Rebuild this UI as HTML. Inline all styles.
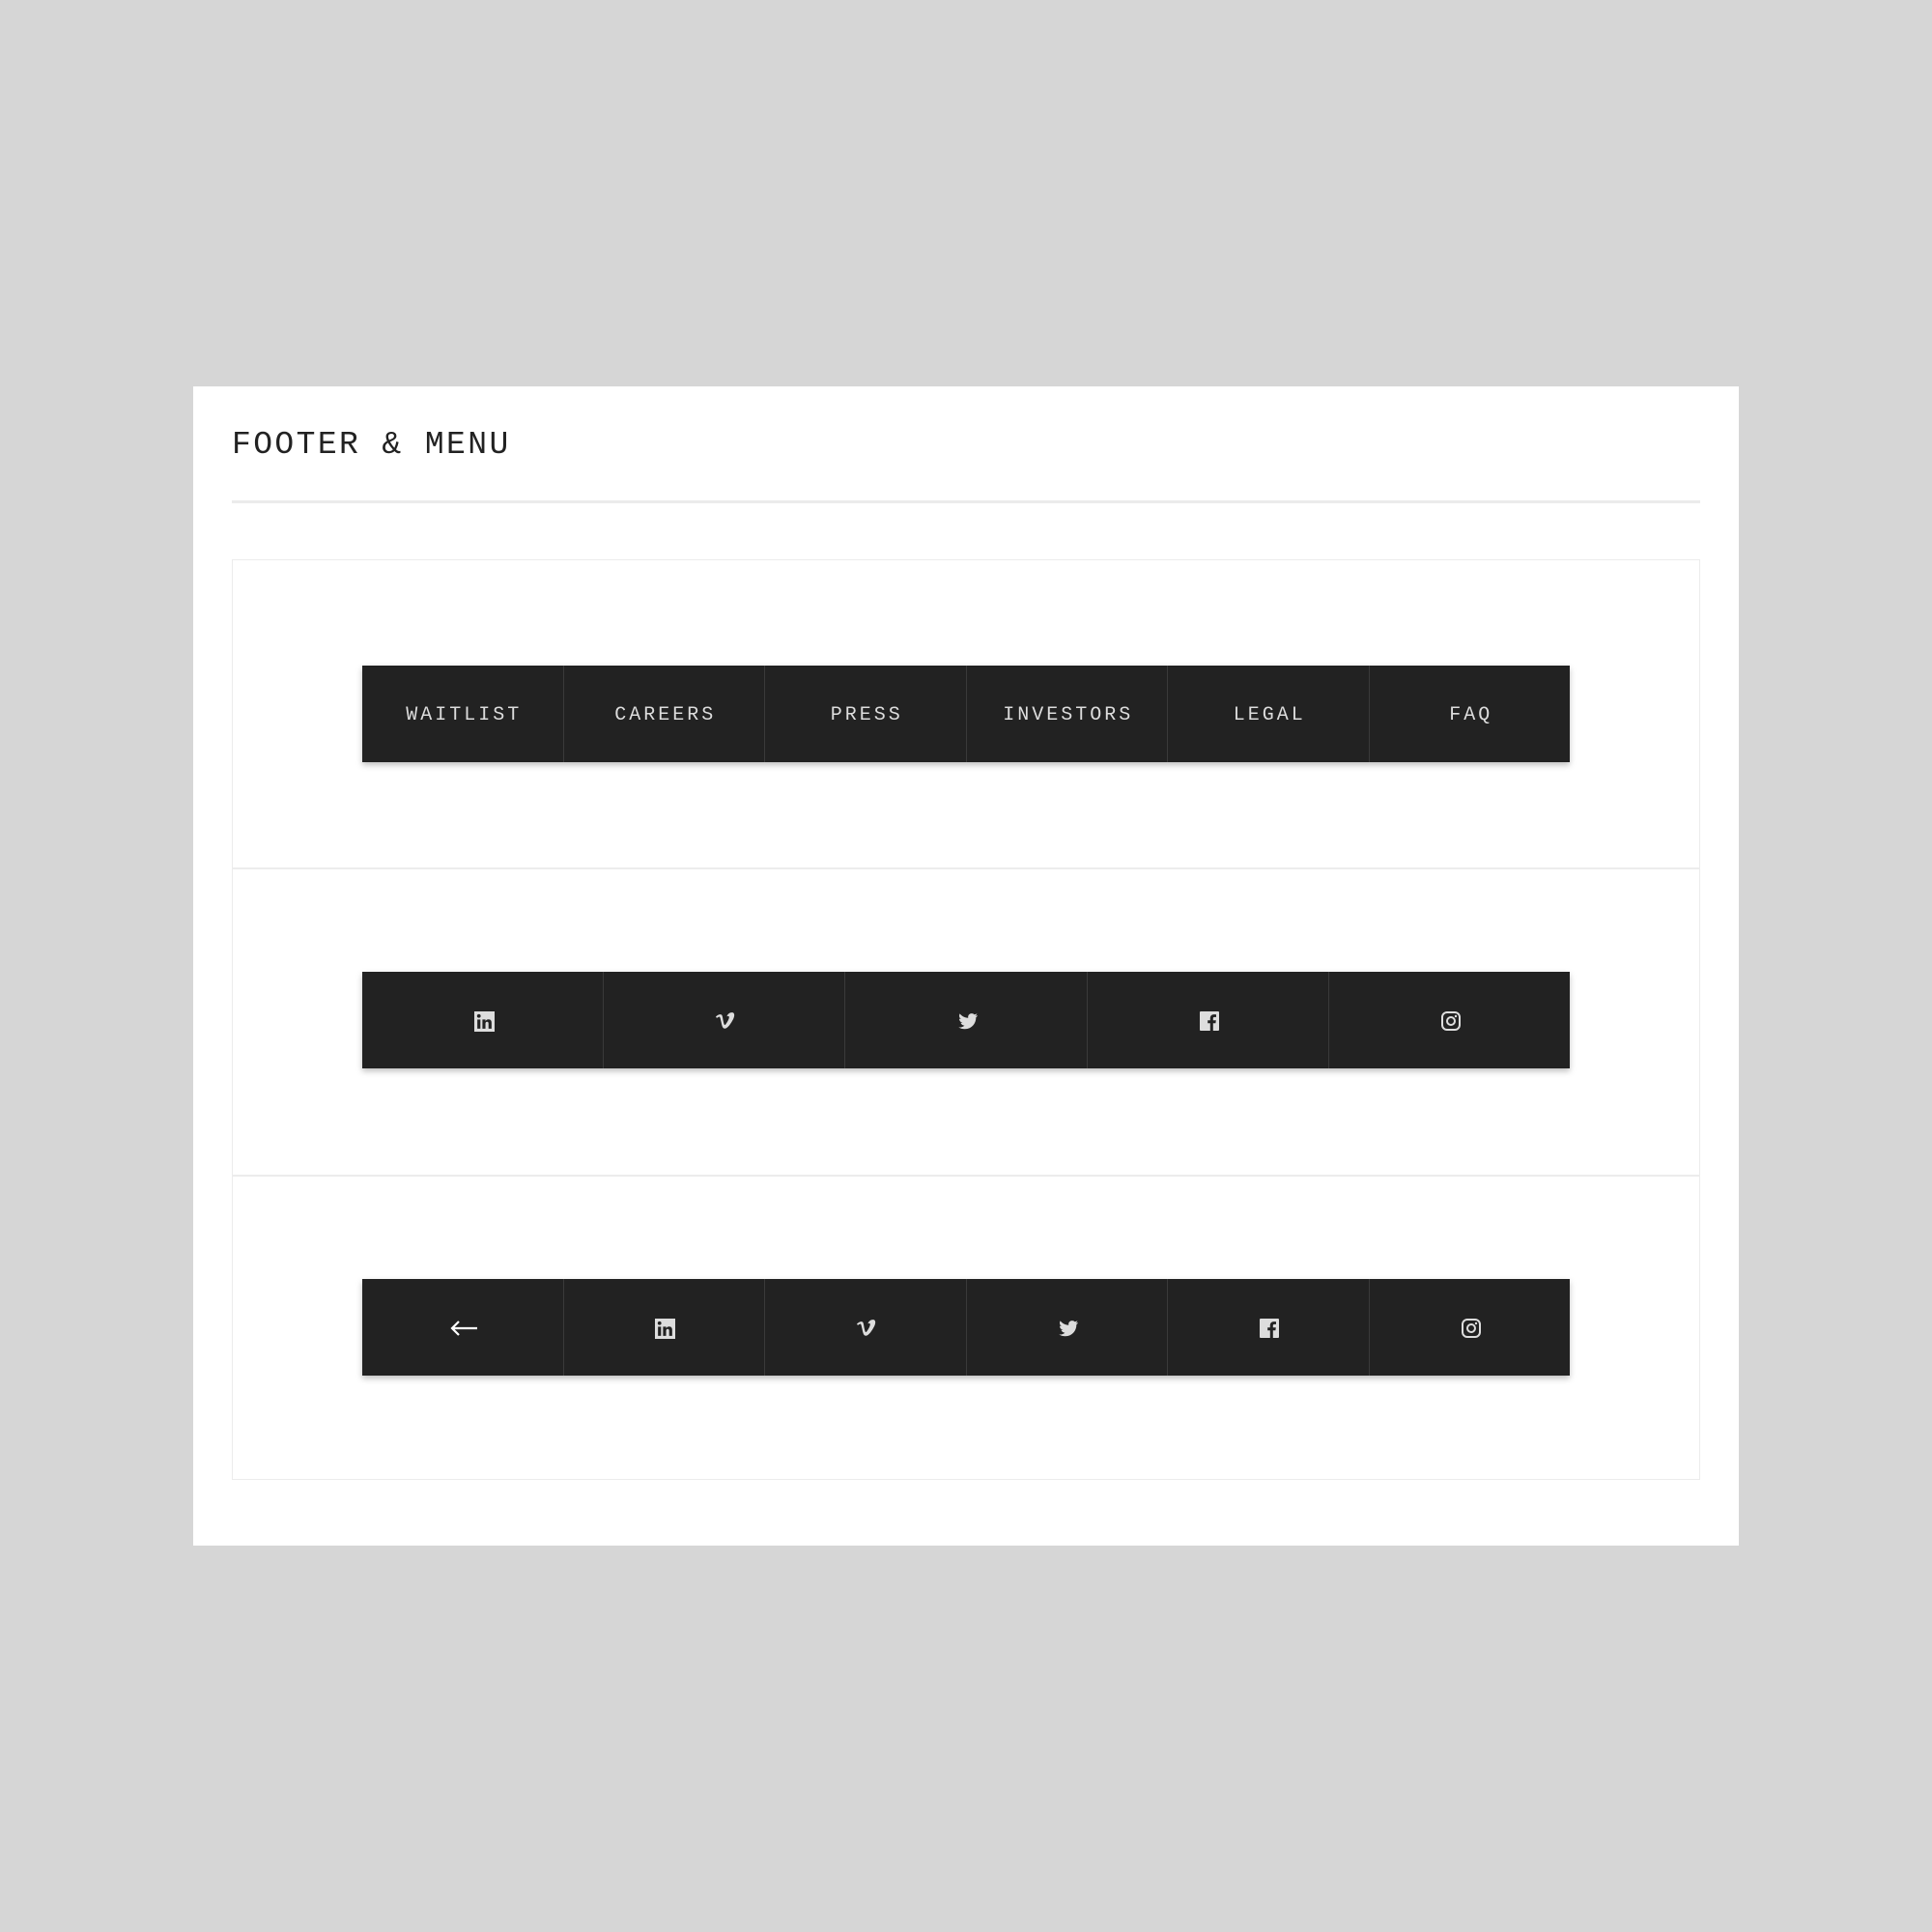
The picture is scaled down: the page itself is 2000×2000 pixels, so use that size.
<!DOCTYPE html>
<html><head><meta charset="utf-8"><style>
*{margin:0;padding:0;box-sizing:border-box}
body{width:2000px;height:2000px;background:#d6d6d6;position:relative;font-family:"Liberation Mono",monospace}
.card{position:absolute;left:200px;top:400px;width:1600px;height:1200px;background:#fff}
.title{position:absolute;left:240px;top:441px;font-size:33px;letter-spacing:2.4px;color:#222;line-height:40px}
.div{position:absolute;left:240px;top:518px;width:1520px;height:3px;background:#ebebeb}
.box{position:absolute;left:240px;top:579px;width:1520px;height:953px;border:1.5px solid #ececec}
.sep{position:absolute;left:240px;width:1520px;height:1.5px;background:#ececec}
.bar{position:absolute;left:375px;width:1250px;height:100px;background:#222;display:flex;box-shadow:0 3px 6px rgba(0,0,0,.25)}
.bar>div{flex:1;display:flex;align-items:center;justify-content:center;border-left:1.5px solid #3a3a3a;color:#ddd;font-size:20px;letter-spacing:3px;padding-top:2px;padding-left:3px}
.bar>div:first-child{border-left:none}
svg{display:block}
</style></head><body>
<div class="card"></div>
<div class="title">FOOTER &amp; MENU</div>
<div class="div"></div>
<div class="box"></div>
<div class="sep" style="top:898px"></div>
<div class="sep" style="top:1216px"></div>
<div class="bar" style="top:689px">
<div>WAITLIST</div><div>CAREERS</div><div>PRESS</div><div>INVESTORS</div><div>LEGAL</div><div>FAQ</div>
</div>
<div class="bar" style="top:1006px">
<div><svg width="21" height="21" viewBox="0 0 20 20"><rect width="20" height="20" fill="#ddd"/><rect x="3" y="8" width="3" height="9" fill="#222"/><circle cx="4.5" cy="4.5" r="1.8" fill="#222"/><path d="M8 8h3v1.5c.6-1 1.6-1.7 3-1.7 2.3 0 3 1.5 3 3.7V17h-3v-5c0-1.1-.4-1.8-1.4-1.8S11 11 11 12v5H8z" fill="#222"/></svg></div>
<div><svg width="22" height="20" viewBox="0 0 22 20"><path d="M1 5.5C3 3.500 5.500 2.500 7 3.500c1.200.9 1.300 6 2.500 9.500.5 1.300 1 1.200 1.800.2 2-2.600 3.800-6 3.400-7.600-.2-1-1.300-.9-2.300-.3C13.500 2 16.500.5 18.700 1.300c2 .8 1.800 3.800.2 7-1.800 3.500-5.500 9.500-8.500 9.500-2.500 0-3-3-4-7.500C5.800 7.700 5.500 5.500 4.500 5.500c-.5 0-1.500.8-2.500 1.400z" fill="#ddd"/></svg></div>
<div><svg width="22" height="20" viewBox="0 0 22 20"><path d="M21 4c-.8.4-1.6.6-2.5.7.9-.5 1.6-1.4 1.9-2.4-.8.5-1.8.8-2.7 1-1.6-1.8-4.6-1.6-6 .5-.5.9-.7 2-.4 3C7.8 6.6 4.7 5 2.6 2.4c-1.1 2-.5 4.4 1.3 5.6-.6 0-1.3-.2-1.9-.5 0 2 1.4 3.8 3.4 4.2-.6.2-1.3.2-1.9.1.6 1.7 2.200 2.900 4 2.900-1.800 1.400-4 2-6.200 1.800C3.300 17.700 5.500 18.300 7.800 18.300c7.400 0 11.500-6.200 11.500-11.500v-.5C20 5.800 20.600 5 21 4z" fill="#ddd"/></svg></div>
<div><svg width="20" height="20" viewBox="0 0 20 20"><rect width="20" height="20" rx="1" fill="#ddd"/><path d="M13.8 20v-7.7h2.600l.4-3h-3V7.400c0-.9.3-1.500 1.500-1.500H17V3.200c-.3 0-1.200-.1-2.300-.1-2.300 0-3.900 1.400-3.900 4v2.200H8.200v3h2.600V20z" fill="#222"/></svg></div>
<div><svg width="22" height="22" viewBox="0 0 22 22"><rect x="2" y="2" width="18" height="18" rx="5" fill="none" stroke="#ddd" stroke-width="2"/><circle cx="11" cy="11" r="4" fill="none" stroke="#ddd" stroke-width="2"/><circle cx="16" cy="6" r="1.2" fill="#ddd"/></svg></div>
</div>
<div class="bar" style="top:1324px">
<div><svg width="30" height="20" viewBox="0 0 30 20"><path d="M29 10H3M10 3l-7 7 7 7" fill="none" stroke="#fff" stroke-width="2.2"/></svg></div>
<div><svg width="21" height="21" viewBox="0 0 20 20"><rect width="20" height="20" fill="#ddd"/><rect x="3" y="8" width="3" height="9" fill="#222"/><circle cx="4.5" cy="4.5" r="1.8" fill="#222"/><path d="M8 8h3v1.5c.6-1 1.6-1.7 3-1.7 2.3 0 3 1.5 3 3.7V17h-3v-5c0-1.1-.4-1.8-1.4-1.8S11 11 11 12v5H8z" fill="#222"/></svg></div>
<div><svg width="22" height="20" viewBox="0 0 22 20"><path d="M1 5.5C3 3.500 5.500 2.500 7 3.500c1.200.9 1.300 6 2.500 9.500.5 1.300 1 1.200 1.800.2 2-2.600 3.800-6 3.400-7.600-.2-1-1.300-.9-2.300-.3C13.500 2 16.500.5 18.700 1.300c2 .8 1.800 3.800.2 7-1.800 3.500-5.500 9.500-8.500 9.500-2.500 0-3-3-4-7.500C5.800 7.700 5.500 5.500 4.500 5.500c-.5 0-1.500.8-2.500 1.400z" fill="#ddd"/></svg></div>
<div><svg width="22" height="20" viewBox="0 0 22 20"><path d="M21 4c-.8.4-1.6.6-2.5.7.9-.5 1.6-1.4 1.9-2.4-.8.5-1.8.8-2.7 1-1.6-1.8-4.6-1.6-6 .5-.5.9-.7 2-.4 3C7.8 6.6 4.7 5 2.6 2.4c-1.1 2-.5 4.4 1.3 5.6-.6 0-1.3-.2-1.9-.5 0 2 1.4 3.8 3.4 4.2-.6.2-1.3.2-1.9.1.6 1.7 2.200 2.900 4 2.900-1.800 1.400-4 2-6.200 1.800C3.300 17.700 5.500 18.300 7.800 18.300c7.400 0 11.500-6.200 11.500-11.500v-.5C20 5.800 20.600 5 21 4z" fill="#ddd"/></svg></div>
<div><svg width="20" height="20" viewBox="0 0 20 20"><rect width="20" height="20" rx="1" fill="#ddd"/><path d="M13.8 20v-7.7h2.600l.4-3h-3V7.400c0-.9.3-1.500 1.500-1.500H17V3.200c-.3 0-1.200-.1-2.300-.1-2.300 0-3.900 1.400-3.900 4v2.200H8.200v3h2.600V20z" fill="#222"/></svg></div>
<div><svg width="22" height="22" viewBox="0 0 22 22"><rect x="2" y="2" width="18" height="18" rx="5" fill="none" stroke="#ddd" stroke-width="2"/><circle cx="11" cy="11" r="4" fill="none" stroke="#ddd" stroke-width="2"/><circle cx="16" cy="6" r="1.2" fill="#ddd"/></svg></div>
</div>
</body></html>
